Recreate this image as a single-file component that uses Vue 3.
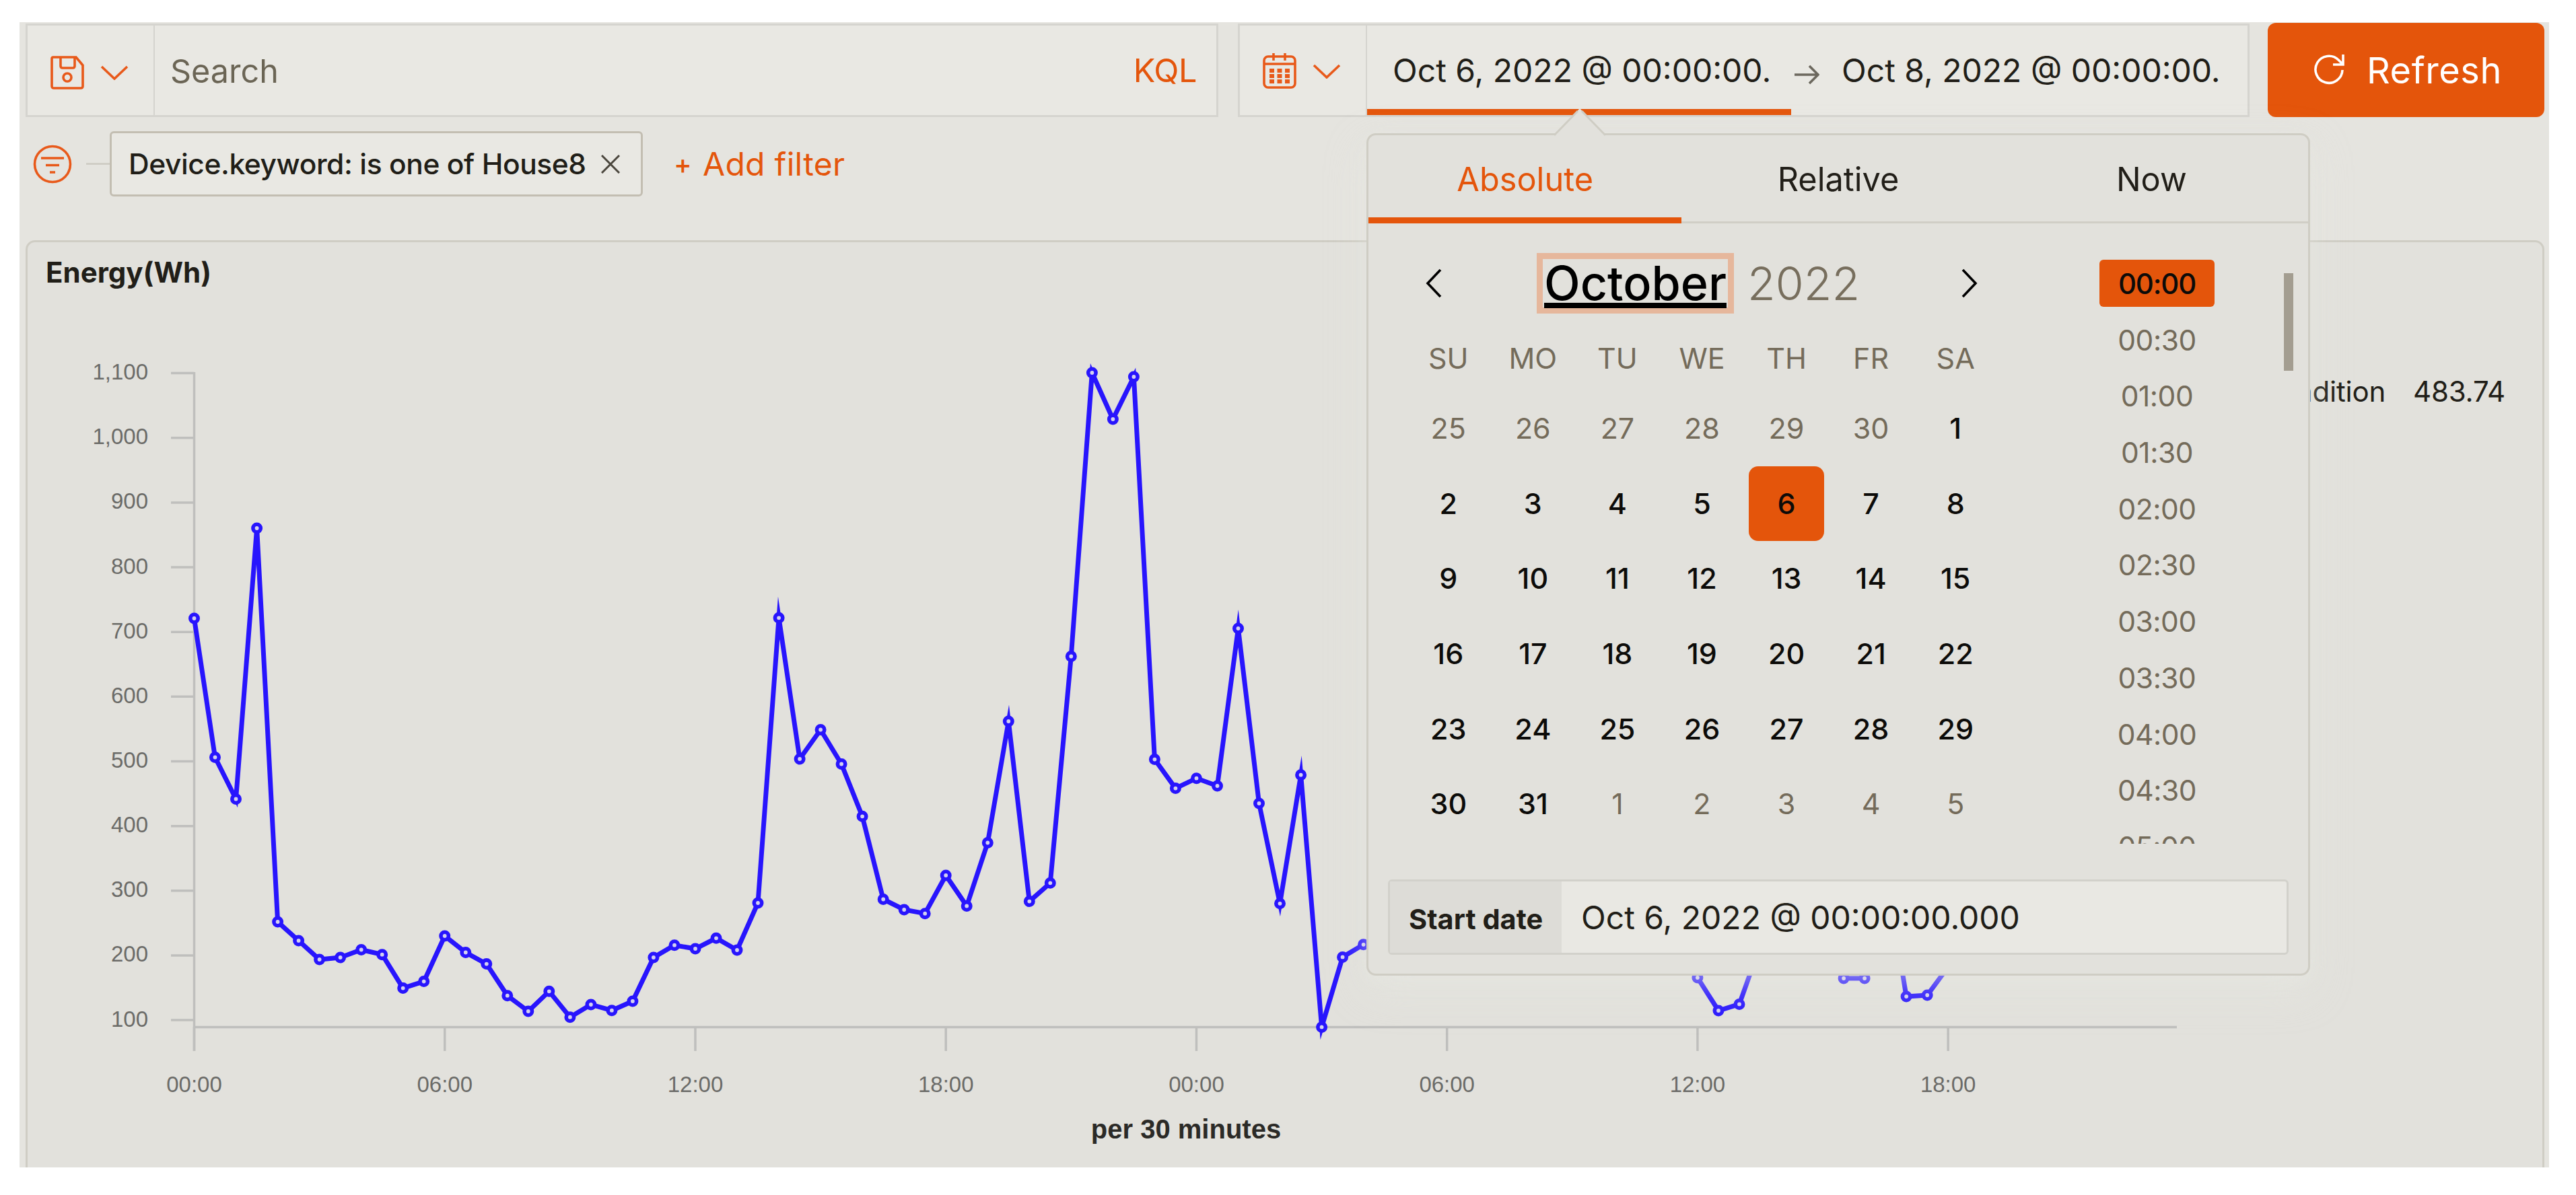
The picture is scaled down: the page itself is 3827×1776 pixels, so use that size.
<script setup>
const weekdays = ['SU', 'MO', 'TU', 'WE', 'TH', 'FR', 'SA']
const days = [
  ...[25, 26, 27, 28, 29, 30].map((n) => ({ n, out: true })),
  ...Array.from({ length: 31 }, (_, i) => ({ n: i + 1, out: false })),
  ...[1, 2, 3, 4, 5].map((n) => ({ n, out: true })),
]
const times = ['00:00', '00:30', '01:00', '01:30', '02:00', '02:30', '03:00', '03:30', '04:00', '04:30', '05:00']

// chart geometry
const x0 = 288.5
const step = 31.02
const yTicks = Array.from({ length: 11 }, (_, i) => ({
  y: 554.6 + i * 96.15,
  label: (1100 - i * 100).toLocaleString('en-US'),
}))
const xTicks = ['00:00', '06:00', '12:00', '18:00', '00:00', '06:00', '12:00', '18:00'].map((label, i) => ({
  x: x0 + i * 12 * step,
  label,
}))
const levels = [
  919, 1125.5, 1187.5, 785, 1370, 1398, 1426, 1423, 1411.5, 1418.7, 1468.6, 1458.6,
  1391, 1415.5, 1432.6, 1479.7, 1503, 1473.3, 1511.7, 1493, 1501.7, 1488, 1423, 1404.7,
  1410, 1394.3, 1412, 1342, 918.3, 1128, 1084.5, 1135.5, 1213.3, 1336.5, 1352, 1357.7,
  1301, 1346.5, 1252.5, 1072, 1339.6, 1312.3, 975.5, 554, 623, 560, 1128.6, 1171.6,
  1156.7, 1168, 934, 1194, 1342.8, 1151.7, 1526.4, 1422.4, 1403.8, 1390, 1380, 1350,
  1360, 1340, 1300, 1310, 1330, 1290, 1250, 1280, 1300, 1340, 1360, 1400,
  1453, 1502, 1492.4, 1405, 1380, 1350, 1380, 1454, 1454, 1290, 1481, 1479, 1437,
]
const points = levels.map((y, i) => ({ x: +(x0 + i * step).toFixed(1), y }))
const path = points.map((p) => `${p.x},${p.y}`).join(' ')
</script>

<template>
  <main class="page">
    <header class="toolbar">
      <div class="search">
        <button class="addon">
          <svg width="50" height="50" viewBox="0 0 50 50">
            <path d="M4 2H38L48 14V45Q48 48 45 48H5Q2 48 2 45V4Q2 2 4 2Z" />
            <path d="M15 2V15Q15 18 18 18H33Q36 18 36 15V2" />
            <circle cx="25" cy="32" r="6" />
          </svg>
          <svg width="42" height="22" viewBox="0 0 42 22"><path d="M2 2L21 20L40 2" /></svg>
        </button>
        <span class="placeholder">Search</span>
        <span class="kql">KQL</span>
      </div>
      <div class="dates">
        <button class="addon">
          <svg width="50" height="56" viewBox="0 0 50 56">
            <rect x="2" y="6" width="46" height="46" rx="6" />
            <path d="M2 17H48M16 1V12M33 1V12" />
            <path class="dots" d="M10 27H40M10 35H40M10 43H40" />
          </svg>
          <svg width="42" height="22" viewBox="0 0 42 22"><path d="M2 2L21 20L40 2" /></svg>
        </button>
        <span class="date active">Oct 6, 2022 @ 00:00:00.</span>
        <svg class="arrow" width="38" height="32" viewBox="0 0 38 32"><path d="M1 16H35M23 3L36 16L23 29" /></svg>
        <span class="date">Oct 8, 2022 @ 00:00:00.</span>
      </div>
      <button class="refresh">
        <svg width="46" height="48" viewBox="0 0 46 48">
          <path d="M42 24A20 20 0 1 1 36 9L42 15M43 1V16H28" />
        </svg>
        <span>Refresh</span>
      </button>
    </header>

    <section class="filters">
      <svg class="filter-icon" width="58" height="58" viewBox="0 0 58 58">
        <circle cx="29" cy="29" r="26.5" />
        <path d="M12 20H46M19 30.500H39M25 41H33" />
      </svg>
      <i class="link"></i>
      <div class="pill">
        <span>Device.keyword: is one of House8</span>
        <svg width="28" height="28" viewBox="0 0 28 28"><path d="M1 1L27 27M27 1L1 27" /></svg>
      </div>
      <a class="add"><span class="plus">+</span>Add filter</a>
    </section>

    <section class="panel">
      <h2>Energy(Wh)</h2>
      <div class="content">
        <svg class="chart" width="3200" height="1275" viewBox="41 460 3200 1275">
          <g class="axis">
            <path :d="`M${x0} 553V1562M${x0} 1526.500H3234`" />
            <path v-for="t in yTicks" :key="t.y" :d="`M254 ${t.y}H${x0}`" />
            <path v-for="t in xTicks" :key="t.x" :d="`M${t.x} 1526V1562`" />
          </g>
          <text v-for="t in yTicks" :key="t.label" class="tick" x="220" :y="t.y + 9.500" text-anchor="end">{{ t.label }}</text>
          <text v-for="t in xTicks" :key="t.x" class="tick" :x="t.x" y="1623" text-anchor="middle">{{ t.label }}</text>
          <text class="caption" x="1762" y="1692" text-anchor="middle">per 30 minutes</text>
          <polyline class="line" :points="path" />
          <circle v-for="p in points" :key="p.x" class="dot" :cx="p.x" :cy="p.y" r="5.700" />
        </svg>
        <div class="legend"><span>Air Condition</span><span>483.74</span></div>
      </div>
    </section>

    <div class="popover">
      <svg class="tip" width="78" height="42" viewBox="0 0 78 42">
        <path class="tip-fill" d="M0 42L39 0L78 42Z" />
        <path class="tip-edge" d="M1 40L36 4M42 4L77 40" />
      </svg>
      <nav class="tabs">
        <span class="tab on">Absolute</span><span class="tab">Relative</span><span class="tab">Now</span>
      </nav>
      <div class="body">
        <div class="calendar">
          <div class="month">
            <svg width="24" height="44" viewBox="0 0 24 44"><path d="M22 2L3 22L22 42" /></svg>
            <span class="name">October</span>
            <span class="year">2022</span>
            <svg class="next" width="24" height="44" viewBox="0 0 24 44"><path d="M2 2L21 22L2 42" /></svg>
          </div>
          <div class="grid names"><span v-for="w in weekdays" :key="w">{{ w }}</span></div>
          <div class="grid">
            <span v-for="(d, i) in days" :key="i" class="day" :class="{ out: d.out, picked: i === 11 }">{{ d.n }}</span>
          </div>
        </div>
        <ul class="times">
          <li v-for="(t, i) in times" :key="t" :class="{ picked: i === 0 }">{{ t }}</li>
        </ul>
        <i class="thumb"></i>
      </div>
      <div class="field">
        <label>Start date</label>
        <span class="value">Oct 6, 2022 @ 00:00:00.000</span>
      </div>
    </div>
  </main>
</template>

<style>
body {
  background: #fff;
}
</style>

<style scoped>
* {
  box-sizing: border-box;
}
.page {
  position: relative;
  width: 3758px;
  height: 1702px;
  margin: 33px 0 0 29px;
  padding: 2px 7px 0 9px;
  overflow: hidden;
  background: #e5e4df;
  color: #211e18;
  font-family: Inter, 'Liberation Sans', sans-serif;
  font-size: 48px;
  white-space: nowrap;
}
svg {
  display: block;
  flex: none;
  fill: none;
  stroke: currentColor;
  stroke-width: 3.6;
}
button {
  border: 0;
  padding: 0;
  background: none;
  font: inherit;
}
.toolbar {
  display: flex;
  height: 139px;
}
.search,
.dates {
  display: flex;
  align-items: center;
  background: #e9e8e3;
  border: 3px solid #d5d4cf;
}
.search {
  width: 1772px;
  margin-right: 29px;
}
.dates {
  width: 1503px;
  margin-right: 27px;
}
.addon {
  display: flex;
  align-items: center;
  align-self: stretch;
  gap: 24px;
  width: 189px;
  padding: 6px 0 0 34px;
  border-right: 2px solid #d5d4cf;
  color: #e8591a;
}
.dates .addon {
  padding-top: 2px;
}
.placeholder {
  margin: 2px 0 0 23px;
  color: #6b6555;
  font-size: 48.500px;
}
.kql {
  margin-left: auto;
  margin-right: 29px;
  color: #e4550b;
  font-size: 48.500px;
  letter-spacing: -0.4px;
}
.date {
  display: flex;
  align-items: center;
  align-self: stretch;
  width: 630px;
  padding-left: 40px;
}
.date.active {
  border-bottom: 9px solid #e4550b;
  padding: 9px 0 0 38px;
}
.arrow {
  margin: 12px -7px 0 4px;
  color: #6b675d;
}
.dots {
  stroke-width: 6;
  stroke-dasharray: 7 4.500;
}
.refresh {
  display: flex;
  align-items: center;
  gap: 32px;
  width: 411px;
  height: 140px;
  margin-top: -1px;
  padding-left: 69px;
  border-radius: 12px;
  background: #e4550b;
  color: #fff;
  font-size: 54px;
}
.refresh span {
  letter-spacing: 0.6px;
}
.filters {
  display: flex;
  align-items: center;
  height: 97px;
  margin: 21px 0 65px;
  padding-left: 11px;
}
.filter-icon {
  color: #e8591a;
}
.link {
  width: 35px;
  height: 3px;
  margin: 0 0 0 21px;
  background: #d0cec6;
}
.pill {
  display: flex;
  align-items: center;
  width: 792px;
  height: 97px;
  padding-left: 25px;
  border: 3px solid #c3beb2;
  border-radius: 6px;
  background: #e9e8e3;
  font-size: 42.500px;
  font-weight: 500;
  letter-spacing: -0.42px;
}
.pill span {
  width: 702px;
}
.pill svg {
  color: #4b473e;
  stroke-width: 3;
}
.add {
  display: flex;
  align-items: center;
  margin-left: 46px;
  color: #e4550b;
  letter-spacing: 0.3px;
}
.plus {
  width: 43px;
  font-size: 40px;
  font-weight: 500;
}
.panel {
  width: 3742px;
  height: 1400px;
  border: 3px solid #cfcdc4;
  border-radius: 14px;
  background: #e2e1dc;
}
.panel h2 {
  height: 100px;
  margin: 0;
  padding-left: 27px;
  font-size: 42px;
  font-weight: 700;
  line-height: 90px;
}
.content {
  display: flex;
}
.legend {
  display: flex;
  flex: 1;
  justify-content: flex-end;
  gap: 41px;
  padding: 96px 55px 0 0;
  font-size: 42px;
  letter-spacing: -0.2px;
}
.axis {
  stroke: #bfbfbd;
  stroke-width: 3.500;
}
.tick {
  fill: #6b6b68;
  stroke: none;
  font: 33px 'Liberation Sans', sans-serif;
}
.caption {
  fill: #2b2a27;
  stroke: none;
  font: bold 40px 'Liberation Sans', sans-serif;
}
.line {
  stroke: #2815fd;
  stroke-width: 7;
  stroke-miterlimit: 10;
}
.dot {
  fill: #d4d1f0;
  stroke: #2815fd;
  stroke-width: 5.600;
}
.popover {
  position: absolute;
  left: 2001px;
  top: 165px;
  width: 1402px;
  height: 1252px;
  border: 3px solid #cfcdc4;
  border-radius: 14px;
  background: #e2e1dc;
  box-shadow: 0 22px 60px rgba(236, 237, 230, 0.35), 0 8px 24px rgba(236, 237, 230, 0.25);
}
.tip {
  position: absolute;
  left: 275px;
  top: -40px;
}
.tip-fill {
  fill: #e2e1dc;
  stroke: none;
}
.tip-edge {
  stroke: #cfcdc4;
  stroke-width: 3;
}
.tabs {
  display: flex;
  height: 131px;
  border-bottom: 3px solid #d0cec6;
  font-size: 48.700px;
}
.tab {
  flex: 1;
  height: 131px;
  line-height: 131px;
  text-align: center;
}
.tab.on {
  border-bottom: 9px solid #e4550b;
  color: #e4550b;
}
.body {
  display: flex;
  height: 921px;
  padding: 44px 0 0 56px;
}
.calendar {
  width: 879px;
}
.month {
  display: flex;
  align-items: center;
  height: 90px;
  margin-bottom: 19px;
  padding: 0 30px 0 29px;
  color: #000;
  font-size: 70px;
}
.name {
  display: flex;
  justify-content: center;
  width: 293px;
  height: 90px;
  margin: 0 20px 0 141px;
  border: 9px solid #e6b79c;
  line-height: 72px;
  font-weight: 500;
  text-decoration: underline;
  text-decoration-thickness: 8px;
  text-decoration-skip-ink: none;
  text-underline-offset: 4px;
}
.year {
  color: #776e5d;
  font-size: 68px;
  font-weight: 300;
}
.next {
  margin-left: auto;
}
.grid {
  display: grid;
  grid-template-columns: repeat(7, 1fr);
  justify-items: center;
  font-size: 43px;
}
.names {
  height: 96px;
  line-height: 95px;
  color: #746b5a;
}
.day {
  width: 111.700px;
  height: 111.700px;
  line-height: 111.700px;
  text-align: center;
  color: #0c0b09;
  font-weight: 500;
}
.day.out {
  color: #746b5a;
  font-weight: 400;
}
.picked,
.day.picked {
  border-radius: 14px;
  background: #e4550b;
  color: #0c0b09;
}
.times {
  display: flex;
  flex-direction: column;
  gap: 13.700px;
  width: 171px;
  height: 868px;
  margin: 10px 0 0 151px;
  padding: 0;
  overflow: hidden;
  list-style: none;
  color: #746b5a;
  font-size: 42.500px;
  letter-spacing: -0.5px;
  text-align: center;
}
.times li {
  flex: none;
  height: 70px;
  line-height: 71px;
}
.times .picked {
  border-radius: 6px;
  color: #0c0b09;
  font-size: 42px;
  font-weight: 500;
  letter-spacing: -1.2px;
}
.thumb {
  width: 14px;
  height: 145px;
  margin: 30px 0 0 103px;
  background: #a39d90;
}
.field {
  display: flex;
  align-items: center;
  width: 1338px;
  height: 112px;
  margin: 54px 0 0 29px;
  border: 3px solid #d2d1cb;
  border-radius: 6px;
  background: #e9e8e3;
}
.field label {
  width: 255px;
  align-self: stretch;
  padding-left: 28px;
  background: #dddcd7;
  font-size: 41.500px;
  font-weight: 700;
  line-height: 112px;
}
.value {
  margin-left: 29px;
}
</style>
